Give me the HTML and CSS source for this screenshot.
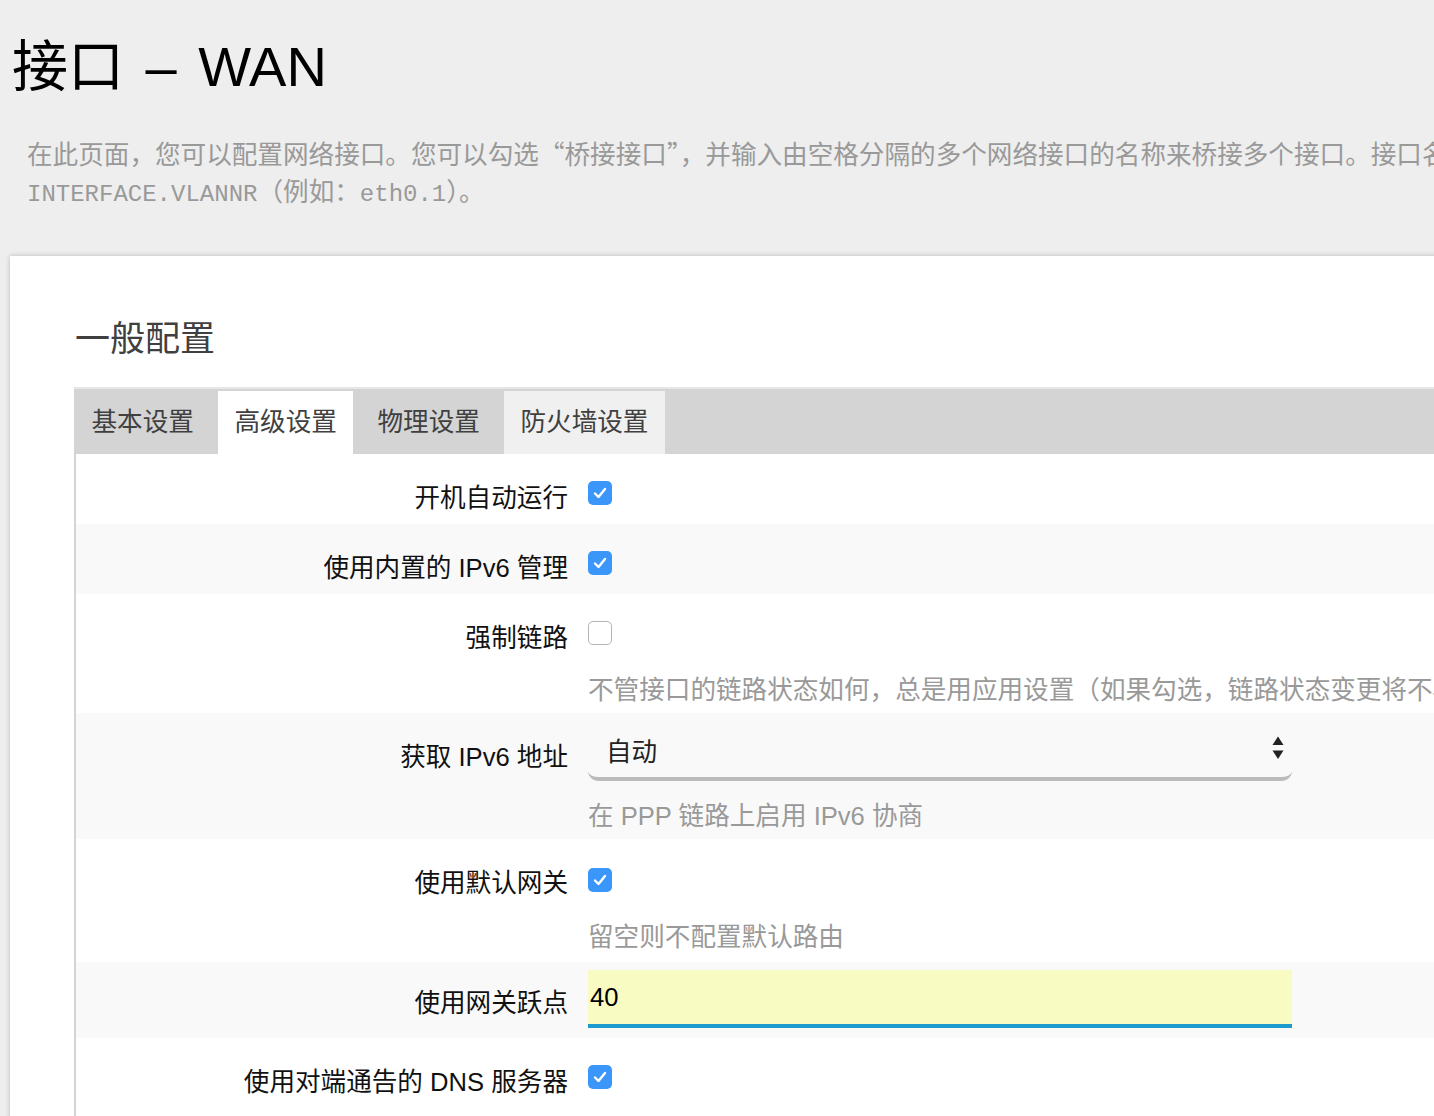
FILE: index.html
```
<!DOCTYPE html>
<html lang="zh-CN">
<head>
<meta charset="utf-8">
<title>接口 - WAN</title>
<link rel="stylesheet" href="styles.css">
</head>
<body>
<h1 class="page-title">接口 – WAN</h1>
<p class="page-desc">在此页面，您可以配置网络接口。您可以勾选<span class="cjk-punct">“</span>桥接接口<span class="cjk-punct">”</span>，并输入由空格分隔的多个网络接口的名称来桥接多个接口。接口名称中可以使用 VLAN 记号<br><code class="mono">INTERFACE.VLANNR</code>（例如：<code class="mono">eth0.1</code>）。</p>

<main class="card">
  <h2 class="section-title">一般配置</h2>
  <ul class="tab-bar">
    <li class="tab">基本设置</li>
    <li class="tab tab-active">高级设置</li>
    <li class="tab">物理设置</li>
    <li class="tab tab-hover">防火墙设置</li>
  </ul>
  <div class="tab-panel">
    <div class="row row-white">
      <div class="label">开机自动运行</div>
      <div class="field">
        <div class="control"><span class="cb cb-on"><svg viewBox="0 0 24 24" width="24" height="24"><path d="M7 12.5 L10.5 16 L17 8" fill="none" stroke="#fff" stroke-width="2.4" stroke-linecap="round" stroke-linejoin="round"/></svg></span></div>
      </div>
    </div>
    <div class="row row-grey">
      <div class="label">使用内置的 IPv6 管理</div>
      <div class="field">
        <div class="control"><span class="cb cb-on"><svg viewBox="0 0 24 24" width="24" height="24"><path d="M7 12.5 L10.5 16 L17 8" fill="none" stroke="#fff" stroke-width="2.4" stroke-linecap="round" stroke-linejoin="round"/></svg></span></div>
      </div>
    </div>
    <div class="row row-white row-desc">
      <div class="label">强制链路</div>
      <div class="field">
        <div class="control"><span class="cb cb-off"></span></div>
        <div class="desc">不管接口的链路状态如何，总是用应用设置（如果勾选，链路状态变更将不再触发热插拔事件）</div>
      </div>
    </div>
    <div class="row row-grey">
      <div class="label">获取 IPv6 地址</div>
      <div class="field">
        <div class="select">
          <span class="select-text">自动</span>
          <svg class="select-arrows" viewBox="0 0 12 24" width="12" height="24"><path d="M0.5 9 L6 0.5 L11.5 9 Z" fill="#222"/><path d="M0.5 14.5 L11.5 14.5 L6 23 Z" fill="#222"/></svg>
        </div>
        <div class="desc desc-select">在 PPP 链路上启用 IPv6 协商</div>
      </div>
    </div>
    <div class="row row-white row-desc row-gw">
      <div class="label">使用默认网关</div>
      <div class="field">
        <div class="control"><span class="cb cb-on"><svg viewBox="0 0 24 24" width="24" height="24"><path d="M7 12.5 L10.5 16 L17 8" fill="none" stroke="#fff" stroke-width="2.4" stroke-linecap="round" stroke-linejoin="round"/></svg></span></div>
        <div class="desc">留空则不配置默认路由</div>
      </div>
    </div>
    <div class="row row-grey row-input">
      <div class="label">使用网关跃点</div>
      <div class="field">
        <div class="text-input">40</div>
      </div>
    </div>
    <div class="row row-white">
      <div class="label">使用对端通告的 DNS 服务器</div>
      <div class="field">
        <div class="control"><span class="cb cb-on"><svg viewBox="0 0 24 24" width="24" height="24"><path d="M7 12.5 L10.5 16 L17 8" fill="none" stroke="#fff" stroke-width="2.4" stroke-linecap="round" stroke-linejoin="round"/></svg></span></div>
      </div>
    </div>
  </div>
</main>
</body>
</html>
```
FILE: styles.css
```
html {
  overflow: hidden;
}
body {
  margin: 0;
  background: #eeeeee;
  font-family: "Liberation Sans", "Noto Sans CJK SC", sans-serif;
  color: #111;
}
.page-title {
  margin: 39px 0 0 12px;
  font-size: 56px;
  line-height: 56px;
  height: 56px;
  font-weight: normal;
  word-spacing: 6px;
  color: #000;
}
.page-desc {
  margin: 39px 0 0 27px;
  font-size: 25.6px;
  line-height: 37px;
  color: #999;
  white-space: nowrap;
}
.cjk-punct {
  font-family: "Noto Sans CJK SC", sans-serif;
  font-feature-settings: "fwid" 1;
}
.mono {
  font-family: "Liberation Mono", monospace;
  font-size: 24px;
}
.card {
  display: block;
  margin: 43px -60px 0 10px;
  padding: 63px 0 40px 64px;
  background: #fff;
  box-shadow: 0 0 5px rgba(0, 0, 0, 0.22);
  min-height: 900px;
}
.section-title {
  margin: 0 0 28px 1px;
  font-size: 35px;
  line-height: 40px;
  font-weight: normal;
  color: #404040;
}
.tab-bar {
  display: flex;
  margin: 0;
  padding: 2px 0 0 1px;
  list-style: none;
  background: #d4d4d4;
  border-top: 2px solid #e6e6e6;
}
.tab {
  height: 63px;
  line-height: 63px;
  padding: 0 16.5px;
  margin-right: 7.6px;
  font-size: 25.6px;
  color: #404040;
}
.tab-active {
  background: #fff;
}
.tab-hover {
  background: #f0f0f0;
}
.tab-panel {
  border-left: 2px solid #d4d4d4;
  padding-bottom: 60px;
}
.row {
  display: flex;
  align-items: flex-start;
  padding: 8px 0 8px;
}
.row-white {
  background: #fff;
}
.row-grey {
  background: #f9f9f9;
}
.row-input {
  padding-bottom: 10px;
}
.row-gw {
  padding-bottom: 10px;
}
.label {
  flex: 0 0 492px;
  padding-top: 21px;
  text-align: right;
  font-size: 25.6px;
  line-height: 30px;
  color: #111;
  white-space: nowrap;
}
.row-input .label {
  padding-top: 18px;
}
.field {
  flex: 1;
  min-width: 0;
  margin-left: 20px;
}
.control {
  box-sizing: border-box;
  height: 54px;
  padding-top: 19px;
}
.row-gw .control {
  padding-top: 21px;
}
.cb {
  display: block;
  box-sizing: border-box;
  width: 24px;
  height: 24px;
  border-radius: 5px;
}
.cb svg {
  display: block;
}
.cb-on {
  background: #3a96f8;
}
.cb-off {
  background: #fff;
  border: 1px solid #b5b5b5;
}
.desc {
  margin-top: 19px;
  font-size: 25.6px;
  line-height: 30px;
  color: #999;
  white-space: nowrap;
}
.row-gw .desc {
  margin-top: 21px;
}
.desc-select {
  margin-top: 20px;
}
.select {
  display: flex;
  align-items: center;
  justify-content: space-between;
  box-sizing: content-box;
  width: 678px;
  height: 51px;
  padding: 5px 8px 0 18px;
  border-bottom: 4px solid #bbbbbb;
  border-radius: 0 0 10px 10px;
  font-size: 25.6px;
  line-height: 30px;
  color: #222;
}
.select-arrows {
  display: block;
  margin-top: -7px;
}
.text-input {
  width: 702px;
  height: 42px;
  padding: 12px 0 0 2px;
  background: #f8fbc2;
  border-bottom: 4px solid #1d9bcd;
  font-size: 25.6px;
  line-height: 30px;
  color: #000;
}
```
